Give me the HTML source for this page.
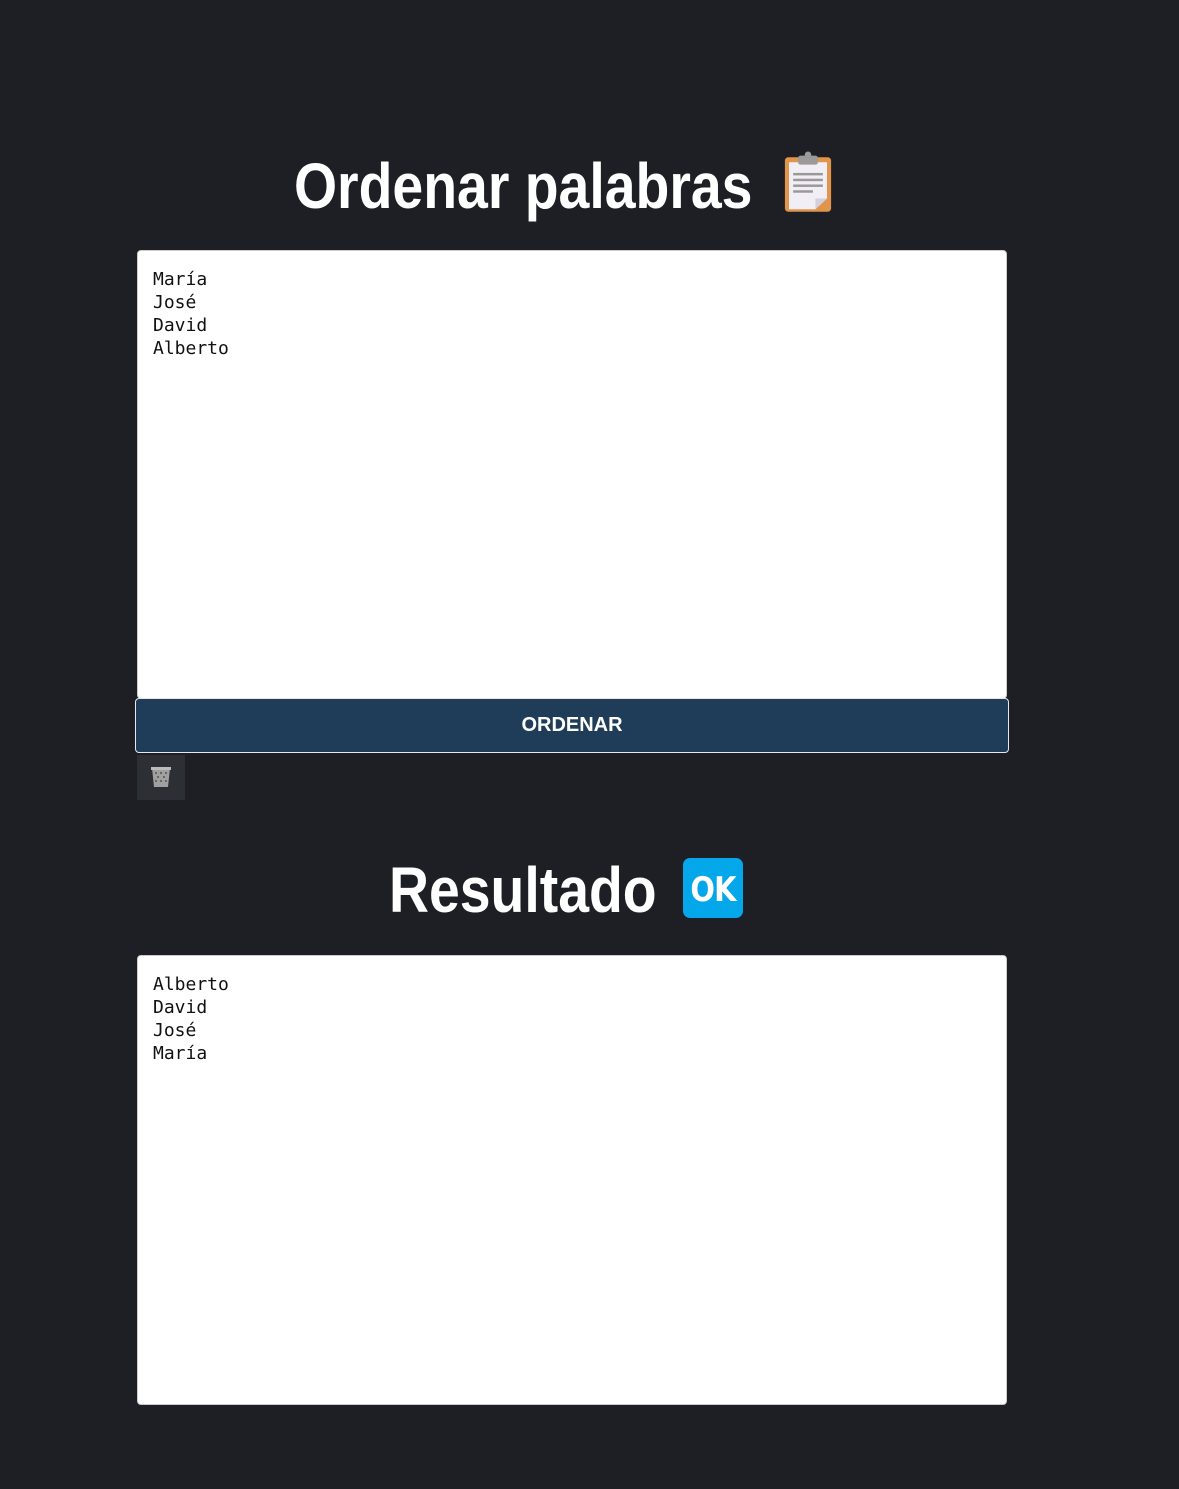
<!DOCTYPE html>
<html><head><meta charset="utf-8"><style>
html,body{margin:0;padding:0;background:#1d1f24;width:1179px;height:1489px;overflow:hidden;font-family:"Liberation Sans",sans-serif}
.t{position:absolute;color:#fff;font-size:64px;font-weight:bold;line-height:normal;white-space:nowrap;transform:scaleX(0.865);transform-origin:0 0}
.ic{position:absolute}
.ta{position:absolute;left:137px;width:870px;background:#fff;border:1px solid #ccc;border-radius:4px;box-sizing:border-box;padding:17px 15px;font-family:"DejaVu Sans Mono",monospace;font-size:18px;line-height:23px;color:#111;white-space:pre}
.btn{position:absolute;left:135px;top:698px;width:874px;height:55px;box-sizing:border-box;background:#1f3d58;border:1px solid #e8e8e8;border-radius:4px;color:#fff;font-weight:bold;font-size:20px;text-align:center;line-height:53px}
.tr{position:absolute;left:137px;top:755px;width:48px;height:45px;background:#2c2f34}
</style></head><body>
<div class="t" style="left:294px;top:149px">Ordenar palabras</div>
<svg class="ic" style="left:775px;top:146px" width="66" height="72" viewBox="0 0 80 80"><rect x="12" y="10" width="56" height="66" rx="4" fill="#e0954a"/><path d="M17 16h46v44l-14 13H17z" fill="#f1eef6"/><path d="M49 73l14-13h-14z" fill="#d4cfdc"/><rect x="28" y="8" width="24" height="11" rx="3" fill="#9a9a9a"/><circle cx="40" cy="7" r="4" fill="#9a9a9a"/><rect x="22" y="29" width="36" height="3" fill="#999"/><rect x="22" y="36" width="36" height="3" fill="#999"/><rect x="22" y="43" width="36" height="3" fill="#999"/><rect x="22" y="50" width="24" height="3" fill="#999"/></svg>
<div class="ta" style="top:250px;height:449px">María
José
David
Alberto</div>
<div class="btn">ORDENAR</div>
<div class="tr"><svg width="48" height="45" viewBox="0 0 48 45"><path d="M15 13h18l-2 19H17z" fill="#a0a0a0"/><rect x="14" y="12" width="20" height="3" fill="#bbb"/><g fill="#555"><circle cx="19" cy="18" r="1"/><circle cx="24" cy="18" r="1"/><circle cx="29" cy="18" r="1"/><circle cx="21" cy="22" r="1"/><circle cx="27" cy="22" r="1"/><circle cx="19" cy="26" r="1"/><circle cx="24" cy="26" r="1"/><circle cx="29" cy="26" r="1"/></g></svg></div>
<div class="t" style="left:389px;top:853px">Resultado</div>
<svg class="ic" style="left:682px;top:857px" width="62" height="62" viewBox="0 0 62 62"><rect x="1" y="1" width="60" height="60" rx="7" fill="#04a7ea"/><text x="31" y="44" text-anchor="middle" font-family="DejaVu Sans" font-weight="bold" font-size="34" fill="#fff" letter-spacing="-1" transform="translate(31 0) scale(0.85 1) translate(-31 0)">OK</text></svg>
<div class="ta" style="top:955px;height:450px">Alberto
David
José
María</div>
</body></html>
